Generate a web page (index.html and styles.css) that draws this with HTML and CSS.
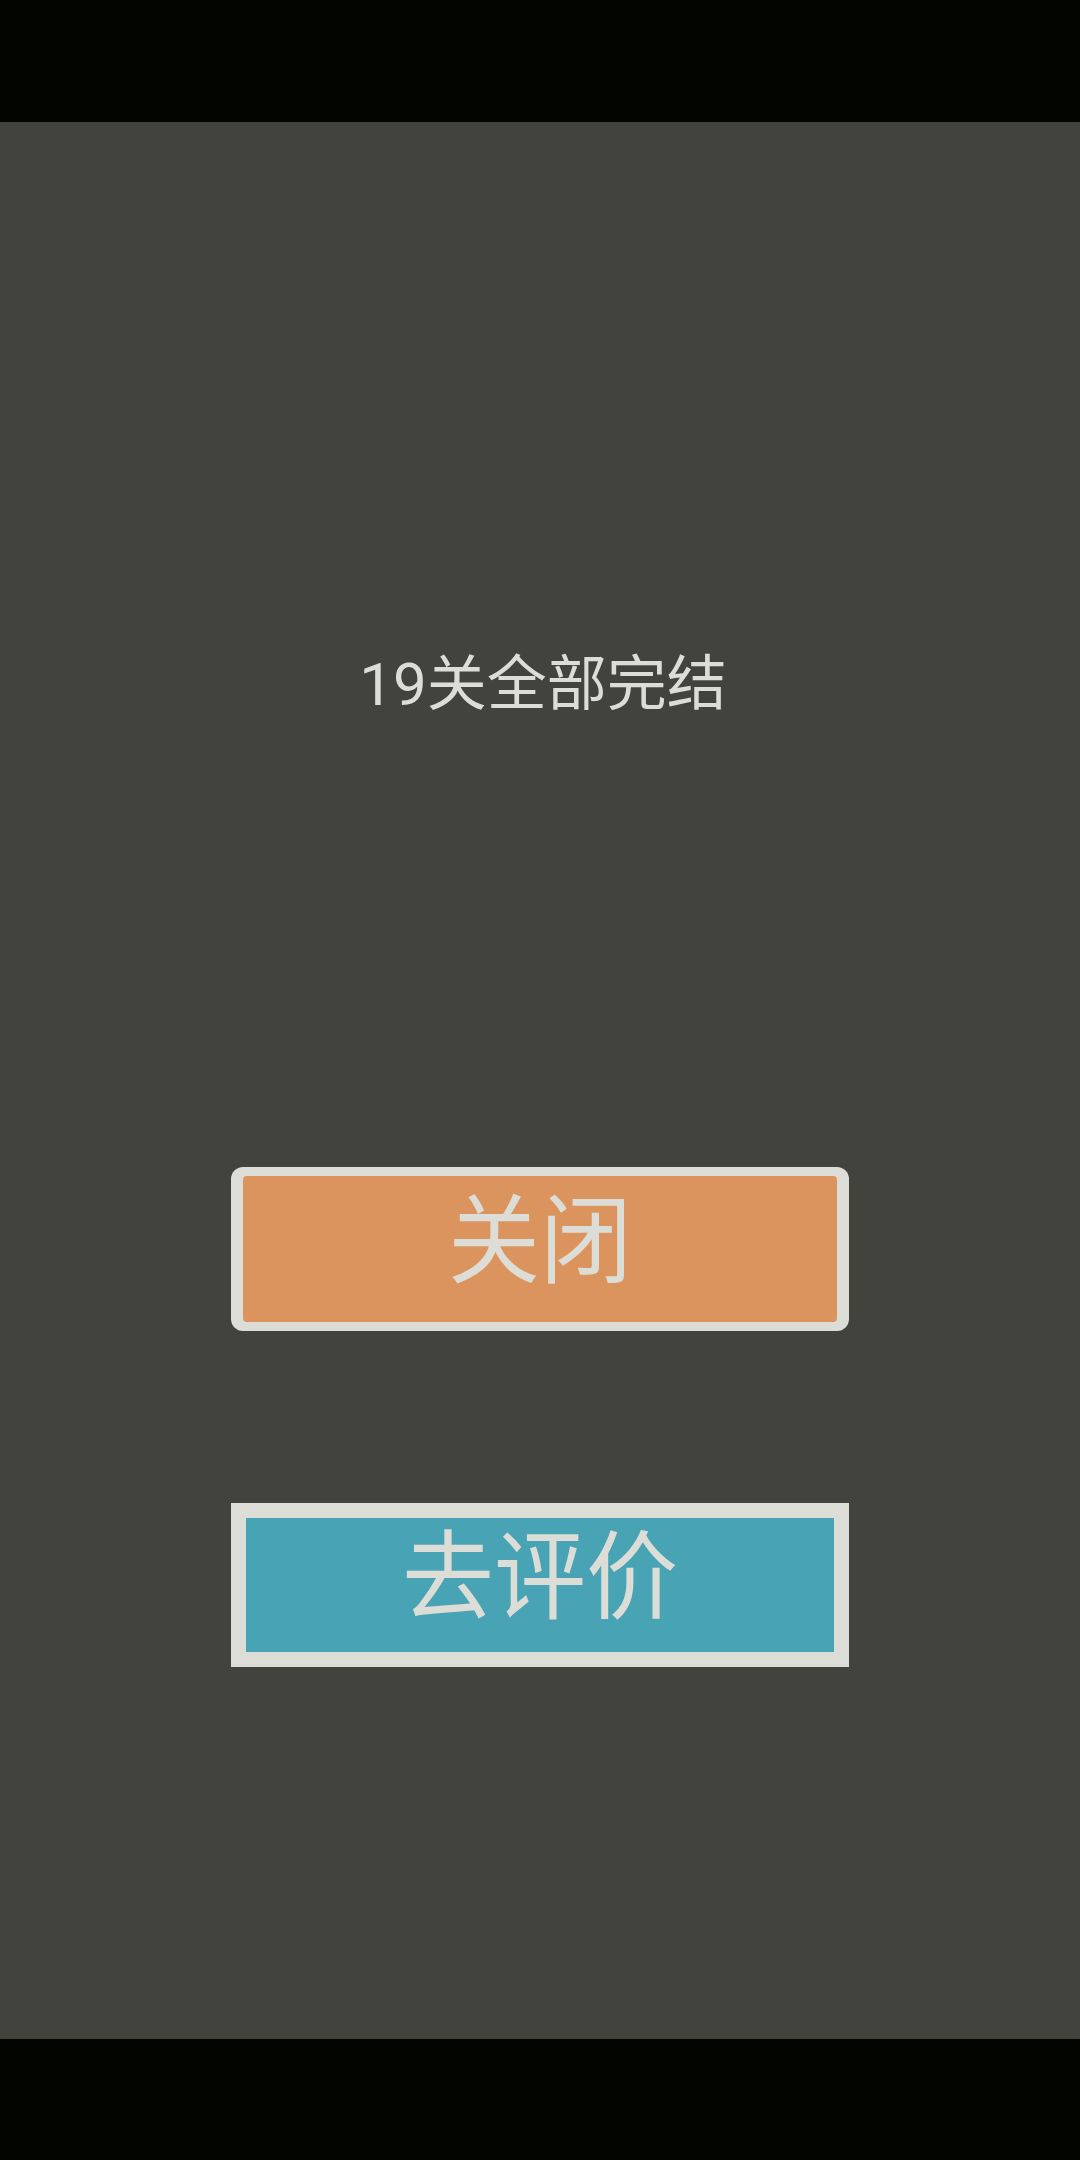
FILE: index.html
```html
<!DOCTYPE html>
<html lang="zh">
<head>
<meta charset="utf-8">
<link rel="stylesheet" href="styles.css">
</head>
<body>
<div class="screen">
  <div class="bar-top"></div>
  <main class="panel">
    <div class="title">19关全部完结</div>
    <div class="actions">
      <div class="btn btn-close">
        <div class="btn-face"><span class="btn-label">关闭</span></div>
      </div>
      <div class="btn btn-rate">
        <div class="btn-face"><span class="btn-label">去评价</span></div>
      </div>
    </div>
  </main>
  <div class="bar-bottom"></div>
</div>
</body>
</html>
```
FILE: styles.css
```css
html, body {
  margin: 0;
  padding: 0;
  background: #030500;
}
.screen {
  width: 1080px;
  height: 2160px;
  display: flex;
  flex-direction: column;
  font-family: Roboto, "Noto Sans CJK SC", sans-serif;
}
.bar-top {
  height: 122px;
  background: #030500;
  flex: none;
}
.bar-bottom {
  height: 121px;
  background: #030500;
  flex: none;
}
.panel {
  flex: 1;
  background: #43433d;
  display: flex;
  flex-direction: column;
  padding-top: 533px;
  box-sizing: border-box;
}
.title {
  color: #dcddd7;
  font-size: 60px;
  line-height: 60px;
  height: 60px;
  text-align: center;
  padding-left: 6px;
}
.actions {
  margin-top: 452px;
  margin-left: 231px;
  width: 618px;
  display: flex;
  flex-direction: column;
  gap: 172px;
}
.btn {
  height: 164px;
  box-sizing: border-box;
  background: #dcddd7;
  display: flex;
}
.btn-face {
  flex: 1;
  display: flex;
  align-items: center;
  justify-content: center;
  padding-bottom: 15px;
  box-sizing: border-box;
}
.btn-label {
  color: #dcddd7;
  font-size: 92px;
  line-height: 92px;
  display: inline-block;
  transform: scaleY(1.05);
}
.btn-close {
  padding: 9px 12px;
  border-radius: 12px;
}
.btn-close .btn-face {
  background: #dc945e;
  border-radius: 4px;
}
.btn-rate {
  padding: 15px;
}
.btn-rate .btn-face {
  background: #48a3b5;
}
```
